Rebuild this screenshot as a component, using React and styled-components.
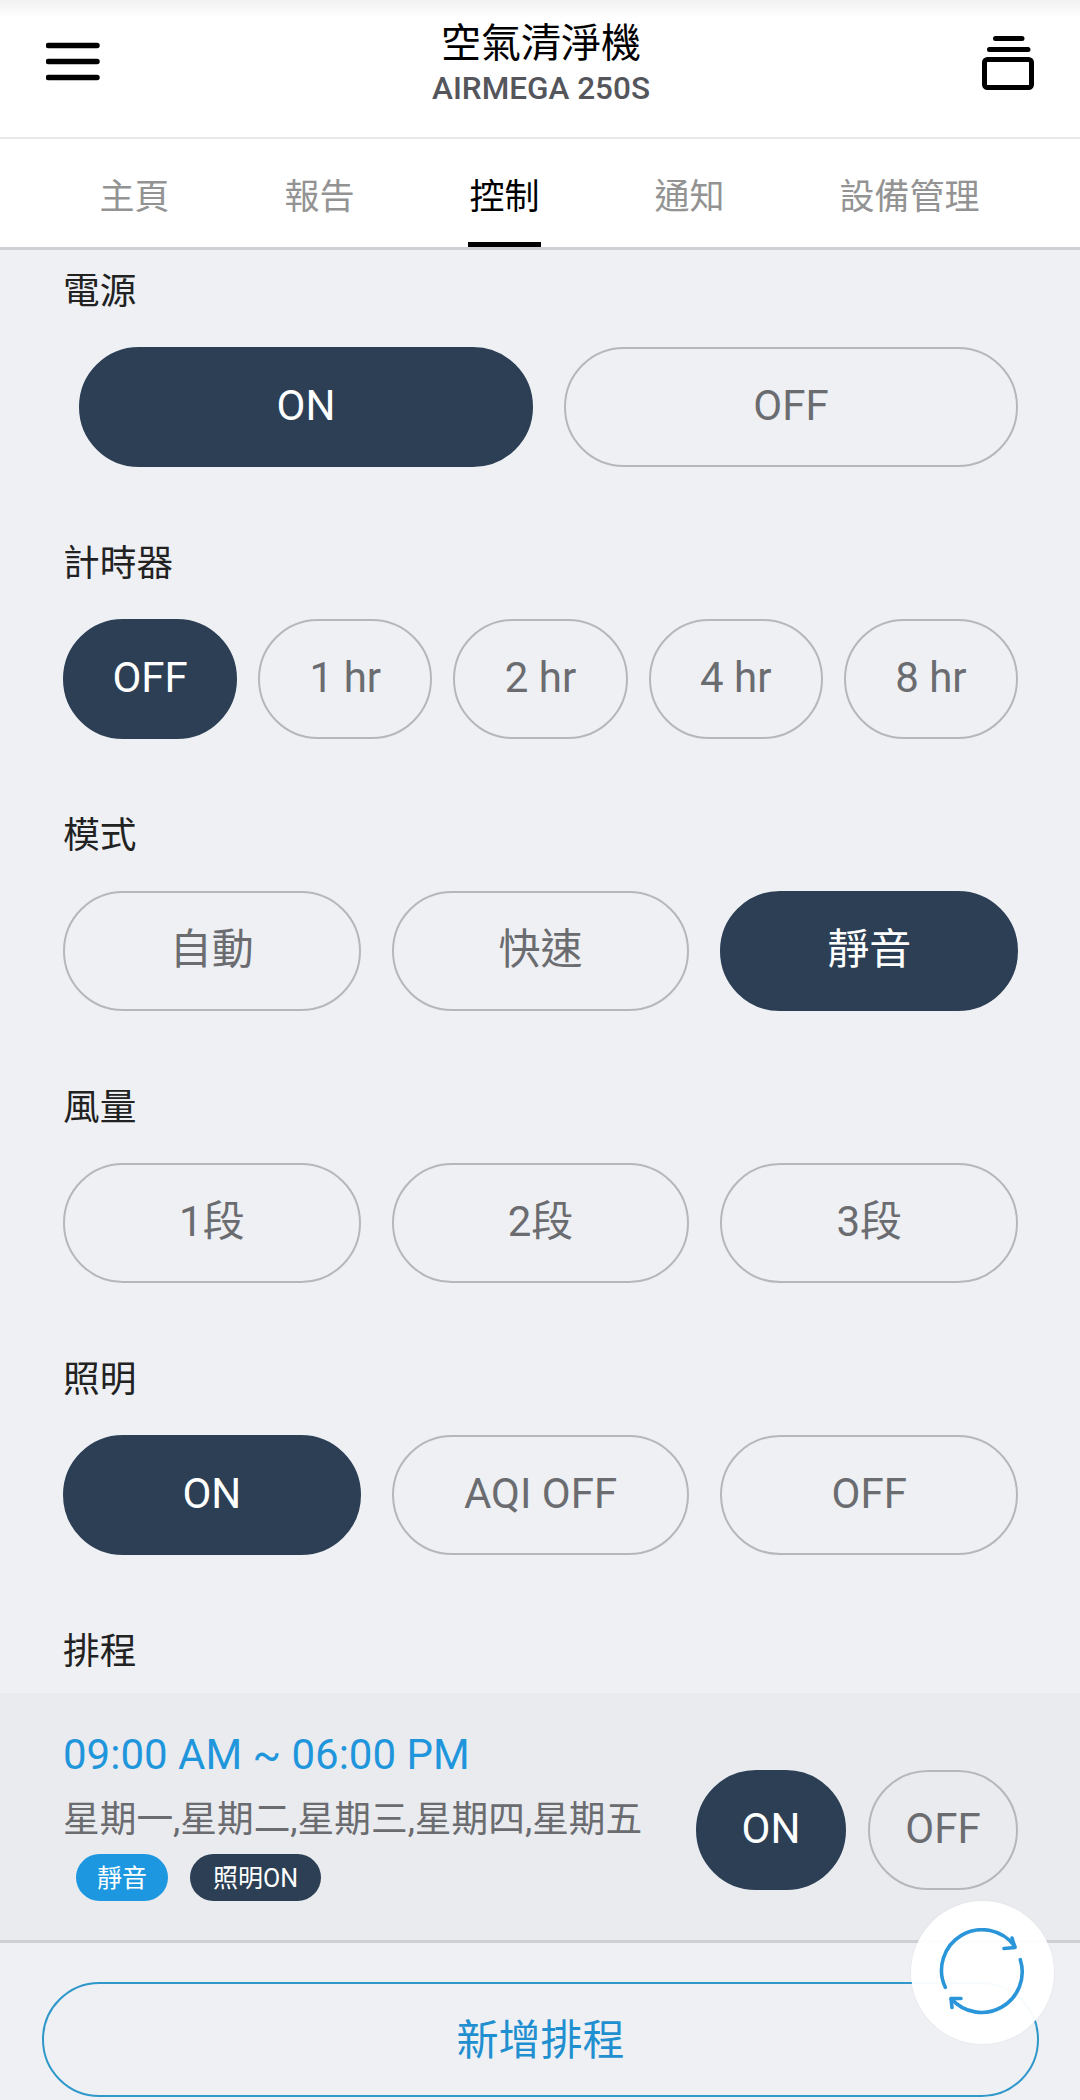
import React from "react";
import styled, { createGlobalStyle } from "styled-components";

const Global = createGlobalStyle`
  html, body { margin: 0; padding: 0; background: #eef0f4; }
  body { font-family: Roboto, "Noto Sans CJK TC", sans-serif; }
  * { box-sizing: border-box; }
`;

const Page = styled.div`
  position: relative;
  width: 1080px;
  height: 2100px;
  overflow: hidden;
  background: #eef0f4;
`;

const Header = styled.header`
  display: flex;
  align-items: flex-start;
  justify-content: space-between;
  height: 139px;
  padding: 0 46px;
  background: linear-gradient(#f1f1f1 0, #ffffff 18px);
  border-bottom: 2px solid #e8e8ea;
`;

const IconSlot = styled.svg`
  display: block;
  flex: none;
  margin-top: ${p => p.$top}px;
`;

const TitleBlock = styled.div`
  display: flex;
  flex-direction: column;
  align-items: center;
  padding-top: 17px;
`;

const Title = styled.div`
  font-size: 40px;
  line-height: 54px;
  color: #000;
`;

const Subtitle = styled.div`
  font-size: 31.5px;
  line-height: 36px;
  font-weight: 500;
  color: #55565c;
`;

const Tabs = styled.nav`
  display: flex;
  height: 111px;
  padding-left: 42px;
  background: #fff;
  border-bottom: 3px solid #cfd0d5;
`;

const Tab = styled.div`
  position: relative;
  display: flex;
  align-items: center;
  height: 108px;
  padding: 0 57.5px;
  font-size: 35px;
  color: ${p => (p.$active ? "#000" : "#939393")};
  ${p => p.$active && `
    &::after {
      content: "";
      position: absolute;
      left: 56px;
      right: 56px;
      bottom: 0;
      height: 5px;
      background: #000;
    }
  `}
`;

const Controls = styled.main`
  padding: 16px 62px 0 63px;
`;

const Section = styled.section`
  margin-bottom: 71px;
  &:last-child { margin-bottom: 0; }
`;

const Label = styled.div`
  height: 48px;
  padding-top: 2px;
  margin-bottom: ${p => p.$gap || 33}px;
  font-size: 36.7px;
  line-height: 48px;
  color: #222;
`;

const Options = styled.div`
  display: flex;
  gap: ${p => p.$gap || 31}px;
  padding-left: ${p => p.$inset || 0}px;
`;

const Option = styled.div`
  flex: 1 1 0;
  display: flex;
  align-items: center;
  justify-content: center;
  height: 120px;
  padding-bottom: ${p => (p.$cjk ? 11 : 4)}px;
  border-radius: 60px;
  font-size: 42px;
  color: ${p => (p.$on ? "#fff" : "#6b6c70")};
  background: ${p => (p.$on ? "#2c3f55" : "transparent")};
  border: 2px solid ${p => (p.$on ? "#2c3f55" : "#b6b7ba")};
`;

const ScheduleRow = styled.div`
  display: flex;
  align-items: flex-start;
  justify-content: space-between;
  height: 250px;
  padding: 38px 62px 0 63px;
  background: #e9ebef;
  border-bottom: 3px solid #cfd0d5;
`;

const ScheduleInfo = styled.div`
  display: flex;
  flex-direction: column;
`;

const Time = styled.div`
  font-size: 42px;
  line-height: 48px;
  color: #1f96dc;
`;

const Days = styled.div`
  margin-top: 17px;
  font-size: 36.7px;
  line-height: 48px;
  color: #6b6c70;
`;

const Tags = styled.div`
  display: flex;
  gap: 22px;
  margin-top: 10px;
  padding-left: 13px;
`;

const Tag = styled.div`
  display: flex;
  align-items: center;
  height: 47px;
  padding: 0 ${p => p.$pad}px 4px;
  border-radius: 24px;
  font-size: 25px;
  color: #fff;
  background: ${p => (p.$blue ? "#1c97e0" : "#2c3f55")};
`;

const ScheduleSwitch = styled.div`
  display: flex;
  gap: 22px;
  margin-top: 39px;
`;

const SmallOption = styled(Option)`
  flex: none;
  width: 150px;
`;

const AddButton = styled.div`
  display: flex;
  align-items: center;
  justify-content: center;
  height: 115px;
  margin: 39px 41px 0 42px;
  padding-bottom: 7px;
  border: 2px solid #2f97c9;
  border-radius: 58px;
  font-size: 42px;
  color: #1f8fd0;
`;

const Refresh = styled.div`
  position: absolute;
  left: 911px;
  top: 1901px;
  width: 143px;
  height: 143px;
  display: flex;
  align-items: center;
  justify-content: center;
  border-radius: 50%;
  background: rgba(255, 255, 255, 0.96);
  box-shadow: 0 0 2px rgba(0, 0, 0, 0.08);
`;

const Menu = () => (
  <IconSlot $top={41} width="54" height="42" viewBox="0 0 54 42" fill="none" stroke="#000" strokeWidth="5.5" strokeLinecap="round">
    <path d="M2.5 4.5H51M2.5 20.5H51M2.5 36.5H51" />
  </IconSlot>
);

const Stack = () => (
  <IconSlot $top={36} width="52" height="54" viewBox="0 0 52 54" fill="none" stroke="#000" strokeWidth="5" strokeLinecap="round" strokeLinejoin="round">
    <path d="M13.5 2.5H40M7.5 13.5H46" />
    <rect x="2.5" y="23.5" width="47" height="28" rx="3" />
  </IconSlot>
);

const RefreshIcon = () => (
  <svg width="90" height="90" viewBox="-45 -45 90 90" fill="none" stroke="#2a95d8" strokeWidth="3.6" strokeLinecap="round" strokeLinejoin="round">
    <path d="M-37.7 14.3A40.5 40.5 0 0 1 31.7 -26.7" />
    <path d="M21 -24.5L32 -25.5L29 -35" />
    <path d="M37.3 -13.3A40.5 40.5 0 0 1 -31.7 25.7" />
    <path d="M-22 25.5L-32 25.5L-31 34.5" />
  </svg>
);

const Choice = ({ items, on, gap, inset, cjk }) => (
  <Options $gap={gap} $inset={inset}>
    {items.map(t => (
      <Option key={t} $on={t === on} $cjk={cjk}>{t}</Option>
    ))}
  </Options>
);

export default function App() {
  return (
    <Page>
      <Global />
      <Header>
        <Menu />
        <TitleBlock>
          <Title>空氣清淨機</Title>
          <Subtitle>AIRMEGA 250S</Subtitle>
        </TitleBlock>
        <Stack />
      </Header>
      <Tabs>
        <Tab>主頁</Tab>
        <Tab>報告</Tab>
        <Tab $active>控制</Tab>
        <Tab>通知</Tab>
        <Tab>設備管理</Tab>
      </Tabs>
      <Controls>
        <Section>
          <Label>電源</Label>
          <Choice items={["ON", "OFF"]} on="ON" inset={16} />
        </Section>
        <Section>
          <Label>計時器</Label>
          <Choice items={["OFF", "1 hr", "2 hr", "4 hr", "8 hr"]} on="OFF" gap={21} />
        </Section>
        <Section>
          <Label>模式</Label>
          <Choice items={["自動", "快速", "靜音"]} on="靜音" cjk />
        </Section>
        <Section>
          <Label>風量</Label>
          <Choice items={["1段", "2段", "3段"]} cjk />
        </Section>
        <Section>
          <Label>照明</Label>
          <Choice items={["ON", "AQI OFF", "OFF"]} on="ON" />
        </Section>
        <Section>
          <Label $gap={19}>排程</Label>
        </Section>
      </Controls>
      <ScheduleRow>
        <ScheduleInfo>
          <Time>09:00 AM ~ 06:00 PM</Time>
          <Days>星期一,星期二,星期三,星期四,星期五</Days>
          <Tags>
            <Tag $blue $pad={21}>靜音</Tag>
            <Tag $pad={23}>照明ON</Tag>
          </Tags>
        </ScheduleInfo>
        <ScheduleSwitch>
          <SmallOption $on>ON</SmallOption>
          <SmallOption>OFF</SmallOption>
        </ScheduleSwitch>
      </ScheduleRow>
      <AddButton>新增排程</AddButton>
      <Refresh><RefreshIcon /></Refresh>
    </Page>
  );
}
